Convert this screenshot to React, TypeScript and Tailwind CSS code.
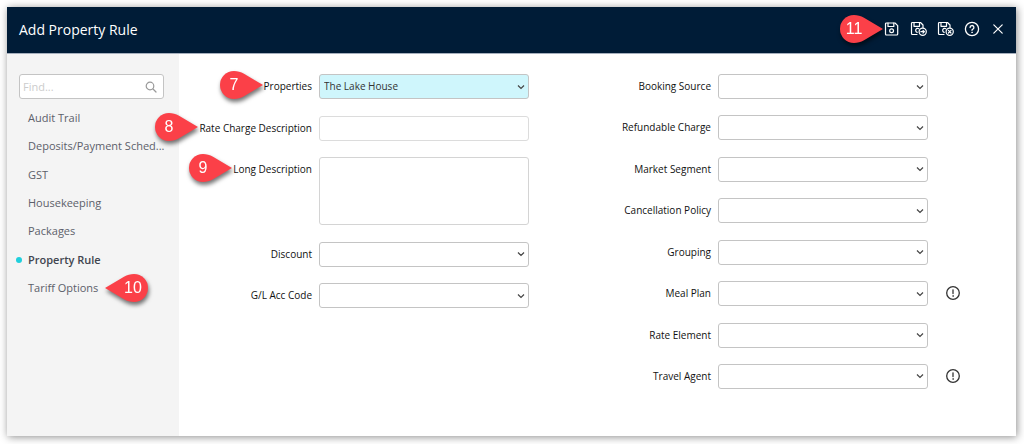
import { useState, type ReactNode } from 'react';

const sections = [
  'Audit Trail',
  'Deposits/Payment Sched...',
  'GST',
  'Housekeeping',
  'Packages',
  'Property Rule',
  'Tariff Options',
];

type PinProps = { n: number; flip?: boolean };

function Pin({ n, flip = false }: PinProps) {
  return (
    <svg
      width="52"
      height="40"
      viewBox="0 0 52 40"
      className="pointer-events-none block drop-shadow-[1px_3px_2px_rgba(0,0,0,0.55)]"
    >
      <path
        transform={flip ? 'translate(52 0) scale(-1 1)' : undefined}
        d="M18 6a14 14 0 1 0 0 28c3.500 0 6.800-.9 10-2.700L47 20 28 8.700C24.800 6.900 21.500 6 18 6Z"
        fill="#fb4048"
      />
      <text
        x={flip ? 33 : 18}
        y="25"
        textAnchor="middle"
        fill="#fff"
        className="font-['Liberation_Sans',sans-serif] text-[16px]"
      >
        {n}
      </text>
    </svg>
  );
}

function SaveIcon({ badge }: { badge?: 'next' | 'close' }) {
  return (
    <svg width="18" height="16" viewBox="0 0 18 16" fill="none" stroke="currentColor" strokeWidth="1.2" strokeLinejoin="round" strokeLinecap="round">
      {badge ? (
        <>
          <path d="M7 13.500H2.500a1 1 0 0 1-1-1v-10a1 1 0 0 1 1-1h8L13 4v2.500" />
          <path d="M4 1.700v3.600h5.500V1.700M8.800 7.700a2 2 0 1 0-1.600 3.600" />
          <circle cx="12.700" cy="10.700" r="3.600" />
          {badge === 'next' ? (
            <path d="M10.900 10.700h3.400M13 9.300l1.400 1.400-1.400 1.400" />
          ) : (
            <path d="m11.400 9.400 2.600 2.600m0-2.600-2.600 2.600" />
          )}
        </>
      ) : (
        <>
          <path d="M3.500 2h8.500l2.700 2.600V13a1 1 0 0 1-1 1H3.500a1 1 0 0 1-1-1V3a1 1 0 0 1 1-1Z" />
          <path d="M5 2.200v3.300h5.800V2.200" />
          <circle cx="8.600" cy="9.700" r="1.900" />
        </>
      )}
    </svg>
  );
}

function HelpIcon() {
  return (
    <svg width="16" height="16" viewBox="0 0 16 16" fill="none" stroke="currentColor" strokeWidth="1.300" strokeLinecap="round">
      <circle cx="8" cy="8" r="6.600" />
      <path d="M6.100 6.500a1.900 1.900 0 1 1 2.800 1.600c-.6.300-.9.600-.9 1.200" />
      <circle cx="8" cy="11.300" r=".4" fill="currentColor" strokeWidth=".7" />
    </svg>
  );
}

function CloseIcon() {
  return (
    <svg width="16" height="16" viewBox="0 0 16 16" fill="none" stroke="currentColor" strokeWidth="1.200" strokeLinecap="round">
      <path d="m3.800 3.800 8.400 8.400m0-8.400-8.400 8.400" />
    </svg>
  );
}

function InfoIcon() {
  return (
    <svg width="16" height="16" viewBox="0 0 16 16" fill="none" stroke="#333" strokeWidth="1.300" strokeLinecap="round">
      <circle cx="8" cy="8" r="6.300" />
      <path d="M8 4.800v3.700" />
      <circle cx="8" cy="11" r=".3" strokeWidth=".9" />
    </svg>
  );
}

type FieldProps = {
  id: string;
  label: string;
  pin?: number;
  info?: boolean;
  children: ReactNode;
};

function Field({ id, label, pin, info, children }: FieldProps) {
  return (
    <div className="grid grid-cols-[133px_1fr_49px] items-start">
      <div className="flex justify-end">
        <label htmlFor={id} className="relative whitespace-nowrap text-[10px] leading-6 text-[#111]">
          {pin !== undefined && (
            <span className="absolute right-full bottom-1/2 -mr-1 translate-y-1/2 pb-[2px]">
              <Pin n={pin} />
            </span>
          )}
          {label}
        </label>
      </div>
      <div className="pl-[7px]">{children}</div>
      {info && (
        <button type="button" aria-label={`About ${label}`} className="flex h-6 items-center justify-center">
          <InfoIcon />
        </button>
      )}
    </div>
  );
}

function SelectField({ id, label, value, pin, info }: { id: string; label: string; value?: string; pin?: number; info?: boolean }) {
  return (
    <Field id={id} label={label} pin={pin} info={info}>
      <div className="relative">
        <select
          id={id}
          defaultValue={value ?? ''}
          className={`block h-[25px] w-full appearance-none rounded-[3px] border border-[#c4c4c4] pl-1 pr-5 text-[10px] text-[#333] ${
            value ? 'bg-[#cff6fc]' : 'bg-white'
          }`}
        >
          <option value={value ?? ''}>{value ?? ''}</option>
        </select>
        <svg width="8" height="6" viewBox="0 0 8 6" className="pointer-events-none absolute right-1 top-1/2 -translate-y-1/2" fill="none" stroke="#444" strokeWidth="1.200">
          <path d="m1 1.500 3 3 3-3" />
        </svg>
      </div>
    </Field>
  );
}

export default function App() {
  const [active, setActive] = useState('Property Rule');

  return (
    <div className="flex min-h-screen bg-white pt-[7px] pr-2 pb-2 pl-[7px] font-['Open_Sans',sans-serif]">
      <div className="flex flex-1 flex-col bg-white shadow-[1px_1px_8px_rgba(0,0,0,0.45)]">
        <header className="flex h-[47px] items-center justify-between border-b border-[#a5afbd] bg-[#001c37] pr-[5px] pb-[2px] pl-3 text-white">
          <h1 className="text-[14px]">Add Property Rule</h1>
          <div className="flex">
            <button type="button" aria-label="Save" className="relative flex w-[27px] justify-center">
              <span className="absolute right-full top-1/2 -mr-[10px] -translate-y-1/2">
                <Pin n={11} />
              </span>
              <SaveIcon />
            </button>
            <button type="button" aria-label="Save and next" className="flex w-[27px] justify-center">
              <SaveIcon badge="next" />
            </button>
            <button type="button" aria-label="Save and close" className="flex w-[27px] justify-center">
              <SaveIcon badge="close" />
            </button>
            <button type="button" aria-label="Help" className="flex w-[26px] justify-center">
              <HelpIcon />
            </button>
            <button type="button" aria-label="Close" className="flex w-[26px] justify-center">
              <CloseIcon />
            </button>
          </div>
        </header>

        <div className="flex flex-1">
          <aside className="w-[172px] shrink-0 bg-[#f4f4f4] pt-5">
            <div className="relative mr-[15px] ml-3">
              <input
                type="search"
                aria-label="Find"
                placeholder="Find..."
                className="block h-[25px] w-full rounded-[3px] border border-[#c4c4c4] bg-white pl-[3px] pr-6 text-[11px] text-[#444] placeholder:text-[#ccc]"
              />
              <svg width="12" height="12" viewBox="0 0 12 12" className="pointer-events-none absolute top-1/2 right-[7px] -translate-y-1/2" fill="none" stroke="#999" strokeWidth="1.200" strokeLinecap="round">
                <circle cx="5" cy="5" r="3.800" />
                <path d="m8 8 3 3" />
              </svg>
            </div>
            <nav className="mt-[5px]">
              <ul className="flex min-h-[198px] flex-col justify-between">
                {sections.map((name) => (
                  <li key={name} className="flex items-center">
                    <span className="flex w-[21px] shrink-0 justify-center pl-[3px]">
                      {active === name && <span className="size-[6px] rounded-full bg-[#1fcfdc]" />}
                    </span>
                    <a
                      href="#"
                      aria-current={active === name ? 'page' : undefined}
                      onClick={(e) => {
                        e.preventDefault();
                        setActive(name);
                      }}
                      className={`whitespace-nowrap text-[11px] leading-[28px] ${
                        active === name ? 'font-semibold text-[#41454f]' : 'text-[#5c606a]'
                      }`}
                    >
                      {name}
                    </a>
                    {name === 'Tariff Options' && (
                      <span className="relative">
                        <span className="absolute top-1/2 left-0 ml-[2px] -translate-y-1/2">
                          <Pin n={10} flip />
                        </span>
                      </span>
                    )}
                  </li>
                ))}
              </ul>
            </nav>
          </aside>

          <main className="grid flex-1 grid-cols-2 items-start pt-5 pr-[39px]">
            <div className="flex min-h-[234px] flex-col justify-between">
              <SelectField id="properties" label="Properties" value="The Lake House" pin={7} />
              <Field id="rate-desc" label="Rate Charge Description" pin={8}>
                <input
                  id="rate-desc"
                  type="text"
                  className="block h-[25px] w-full rounded-[3px] border border-[#dcdcdc] px-1 text-[10px] text-[#333]"
                />
              </Field>
              <Field id="long-desc" label="Long Description" pin={9}>
                <textarea
                  id="long-desc"
                  className="block h-[68px] w-full resize-none rounded-[3px] border border-[#d4d4d4] px-1 text-[10px] text-[#333]"
                />
              </Field>
              <SelectField id="discount" label="Discount" />
              <SelectField id="gl" label="G/L Acc Code" />
            </div>
            <div className="flex min-h-[315px] flex-col justify-between">
              <SelectField id="source" label="Booking Source" />
              <SelectField id="refundable" label="Refundable Charge" />
              <SelectField id="segment" label="Market Segment" />
              <SelectField id="policy" label="Cancellation Policy" />
              <SelectField id="grouping" label="Grouping" />
              <SelectField id="meal" label="Meal Plan" info />
              <SelectField id="element" label="Rate Element" />
              <SelectField id="agent" label="Travel Agent" info />
            </div>
          </main>
        </div>
      </div>
    </div>
  );
}
